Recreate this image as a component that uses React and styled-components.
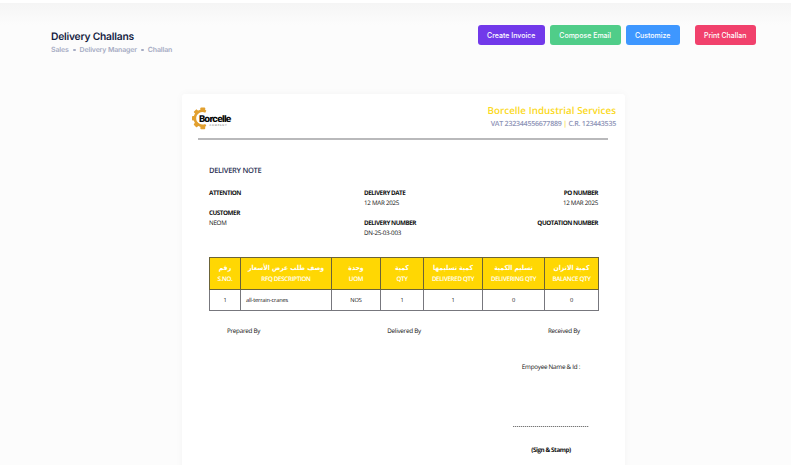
import React from "react";
import styled, { createGlobalStyle } from "styled-components";

const Global = createGlobalStyle`
  * { box-sizing: border-box; }
  html, body { margin: 0; height: 465px; overflow: hidden; background: #fcfcfc; }
  h1, h2, p { margin: 0; }
`;

const Page = styled.main`
  height: 465px;
  overflow: hidden;
  border-top: 3px solid #fff;
  background: linear-gradient(#f5f5f5, #fcfcfc 22px);
  font-family: Inter, sans-serif;
  text-rendering: geometricPrecision;
`;

const Toolbar = styled.header`
  display: flex;
  justify-content: space-between;
  align-items: flex-start;
  height: 91px;
  padding: 22.4px 35.3px 0 51px;
`;

const Title = styled.h1`
  padding-top: 3.6px;
  font-size: 10.3px;
  line-height: 17px;
  font-weight: 600;
  color: #151d42;
  letter-spacing: -0.23px;
`;

const Crumbs = styled.nav`
  display: flex;
  align-items: center;
  gap: 4px;
  font-size: 7px;
  line-height: 8px;
  font-weight: 600;
  letter-spacing: -0.16px;
  color: #a5abc3;
`;

const Dot = styled.i`
  width: 3px;
  height: 2px;
  border-radius: 1px;
  background: #a5abc3;
`;

const Actions = styled.div`
  display: flex;
  gap: 5px;
`;

const Button = styled.button`
  width: ${(p) => p.$w}px;
  height: 19.5px;
  margin: 0 0 0 ${(p) => p.$gap || 0}px;
  padding: 0;
  border: 0;
  border-radius: 3px;
  background: ${(p) => p.$bg};
  color: #fff;
  font: 500 7px/19px Inter, sans-serif;
  white-space: nowrap;
`;

const Paper = styled.article`
  width: 443px;
  height: 420px;
  margin-left: 182px;
  border-radius: 3px 3px 0 0;
  background: #fff;
  box-shadow: 0 0 8px rgba(40, 40, 60, 0.035);
  font-family: "Open Sans", "Noto Sans", sans-serif;
  color: #111;
`;

const Letterhead = styled.div`
  display: flex;
  justify-content: space-between;
  height: 44px;
  padding: 12px 9px 0 9px;
`;

const Company = styled.div`
  text-align: right;
  white-space: nowrap;
`;

const CompanyName = styled.h2`
  margin-top: -2px;
  font-size: 9.8px;
  line-height: 14px;
  font-weight: 600;
  letter-spacing: 0.04px;
  color: #fbd91c;
`;

const CompanyIds = styled.p`
  font-size: 7.1px;
  line-height: 13px;
  font-weight: 600;
  letter-spacing: -0.26px;
  color: #8d93b6;
  span { color: #fbdc2e; }
`;

const Rule = styled.div`
  height: 2px;
  margin: 0 17px 0 16px;
  background: #b9b9bb;
`;

const Content = styled.section`
  padding: 0 27px;
`;

const NoteTitle = styled.h2`
  padding-top: 25px;
  font-size: 7.5px;
  line-height: 12px;
  font-weight: 600;
  letter-spacing: -0.3px;
  color: #2b3154;
`;

const Details = styled.div`
  display: grid;
  grid-template-columns: 155px 120px 1fr;
  height: 80px;
  padding-top: 11px;
`;

const DetailColumn = styled.div`
  display: flex;
  flex-direction: column;
  text-align: ${(p) => p.$align || "left"};
`;

const Label = styled.p`
  margin-top: ${(p) => p.$top || 0}px;
  font-size: 6.3px;
  line-height: 10px;
  font-weight: 700;
  letter-spacing: -0.46px;
  color: #111;
`;

const Value = styled.p`
  font-size: 6.2px;
  line-height: 10px;
  letter-spacing: -0.24px;
  color: #111;
`;

const Table = styled.table`
  width: 389px;
  border-collapse: collapse;
  table-layout: fixed;
`;

const Col = styled.col`
  width: ${(p) => p.$w}px;
`;

const HeadCell = styled.th`
  height: 32px;
  padding: 0 0 1px;
  border: 1px solid #6b6338;
  background: #ffd703;
  color: #fff;
  font-size: 6.2px;
  line-height: 10px;
  font-weight: 600;
  letter-spacing: -0.3px;
  white-space: nowrap;
`;

const Arabic = styled.div`
  font: 700 6.8px/11px "DejaVu Sans Condensed", "DejaVu Sans", sans-serif;
  font-stretch: 75%;
  letter-spacing: 0;
`;

const Cell = styled.td`
  height: 21px;
  padding: 0 0 1px ${(p) => (p.$left ? 5 : 0)}px;
  border: 1px solid #77777d;
  font-size: 5.7px;
  line-height: 10px;
  letter-spacing: -0.18px;
  text-align: ${(p) => (p.$left ? "left" : "center")};
`;

const Signatures = styled.div`
  display: flex;
  justify-content: space-between;
  padding: 15px 18px 0;
  font-size: 6.3px;
  line-height: 10px;
  letter-spacing: -0.26px;
`;

const Receiver = styled.div`
  width: 94px;
  margin: 26px 0 0 auto;
  font-size: 6.3px;
  line-height: 10px;
  letter-spacing: -0.26px;
  text-align: center;
`;

const SignLine = styled.div`
  width: 76px;
  height: 1px;
  margin: 54px auto 0;
  background: repeating-linear-gradient(90deg, #777 0 1.4px, #d8d8d8 1.4px 2px);
`;

const Stamp = styled.p`
  padding-top: 18px;
  font-weight: 700;
  letter-spacing: -0.42px;
  color: #111;
`;

const Wordmark = styled.text`
  font: 800 9.4px Inter, sans-serif;
  letter-spacing: -0.75px;
  fill: #090909;
`;

const Tagline = styled.text`
  font: 500 2.4px Inter, sans-serif;
  letter-spacing: 0.8px;
  fill: #777;
`;

function Logo() {
  return (
    <svg width="42" height="25" viewBox="0 0 42 25">
      <path d="M14.8 5.6A7.5 7.5 0 1 0 14.8 19" fill="none" stroke="#e2a02f" strokeWidth="2.5" />
      <g fill="#e2a02f">
        <rect x="9.4" y="1.4" width="4.8" height="4" rx="0.8" />
        <rect x="9.4" y="19.2" width="4.8" height="4" rx="0.8" />
        <rect x="1" y="10.1" width="4" height="4.4" rx="0.8" />
        <rect x="3.3" y="4" width="4.4" height="4.2" rx="0.8" transform="rotate(45 5.5 6.1)" />
        <rect x="3.3" y="16.4" width="4.4" height="4.2" rx="0.8" transform="rotate(45 5.5 18.5)" />
      </g>
      <Wordmark x="7.9" y="15.6">Borcelle</Wordmark>
      <Tagline x="18.5" y="20.2">COMPANY</Tagline>
    </svg>
  );
}

const columns = [
  { w: 31, ar: "رقم", en: "S.NO.", value: "1" },
  { w: 91, ar: "وصف طلب عرض الأسعار", en: "RFQ DESCRIPTION", value: "all-terrain-cranes", left: true },
  { w: 49, ar: "وحدة", en: "UOM", value: "NOS" },
  { w: 43, ar: "كمية", en: "QTY", value: "1" },
  { w: 59, ar: "كمية تسليمها", en: "DELIVERED QTY", value: "1" },
  { w: 62, ar: "تسليم الكمية", en: "DELIVERING QTY", value: "0" },
  { w: 54, ar: "كمية الاتزان", en: "BALANCE QTY", value: "0" },
];

export default function App() {
  return (
    <Page>
      <Global />
      <Toolbar>
        <div>
          <Title>Delivery Challans</Title>
          <Crumbs>
            Sales <Dot /> Delivery Manager <Dot /> Challan
          </Crumbs>
        </div>
        <Actions>
          <Button $w={67} $bg="#7239ea">Create Invoice</Button>
          <Button $w={71} $bg="#50cd89">Compose Email</Button>
          <Button $w={54} $bg="#3e97ff">Customize</Button>
          <Button $w={61} $gap={10} $bg="#f1416c">Print Challan</Button>
        </Actions>
      </Toolbar>
      <Paper>
        <Letterhead>
          <Logo />
          <Company>
            <CompanyName>Borcelle Industrial Services</CompanyName>
            <CompanyIds>VAT 232344556677889 <span>|</span> C.R. 123443535</CompanyIds>
          </Company>
        </Letterhead>
        <Rule />
        <Content>
          <NoteTitle>DELIVERY NOTE</NoteTitle>
          <Details>
            <DetailColumn>
              <Label>ATTENTION</Label>
              <Label $top={10}>CUSTOMER</Label>
              <Value>NEOM</Value>
            </DetailColumn>
            <DetailColumn>
              <Label>DELIVERY DATE</Label>
              <Value>12 MAR 2025</Value>
              <Label $top={10}>DELIVERY NUMBER</Label>
              <Value>DN-25-03-003</Value>
            </DetailColumn>
            <DetailColumn $align="right">
              <Label>PO NUMBER</Label>
              <Value>12 MAR 2025</Value>
              <Label $top={10}>QUOTATION NUMBER</Label>
            </DetailColumn>
          </Details>
          <Table>
            <colgroup>{columns.map((c) => <Col key={c.en} $w={c.w} />)}</colgroup>
            <thead>
              <tr>
                {columns.map((c) => (
                  <HeadCell key={c.en}><Arabic dir="rtl" lang="ar">{c.ar}</Arabic>{c.en}</HeadCell>
                ))}
              </tr>
            </thead>
            <tbody>
              <tr>{columns.map((c) => <Cell key={c.en} $left={c.left}>{c.value}</Cell>)}</tr>
            </tbody>
          </Table>
          <Signatures>
            <span>Prepared By</span>
            <span>Delivered By</span>
            <span>Received By</span>
          </Signatures>
          <Receiver>
            <p>Empoyee Name &amp; Id :</p>
            <SignLine />
            <Stamp>(Sign &amp; Stamp)</Stamp>
          </Receiver>
        </Content>
      </Paper>
    </Page>
  );
}
